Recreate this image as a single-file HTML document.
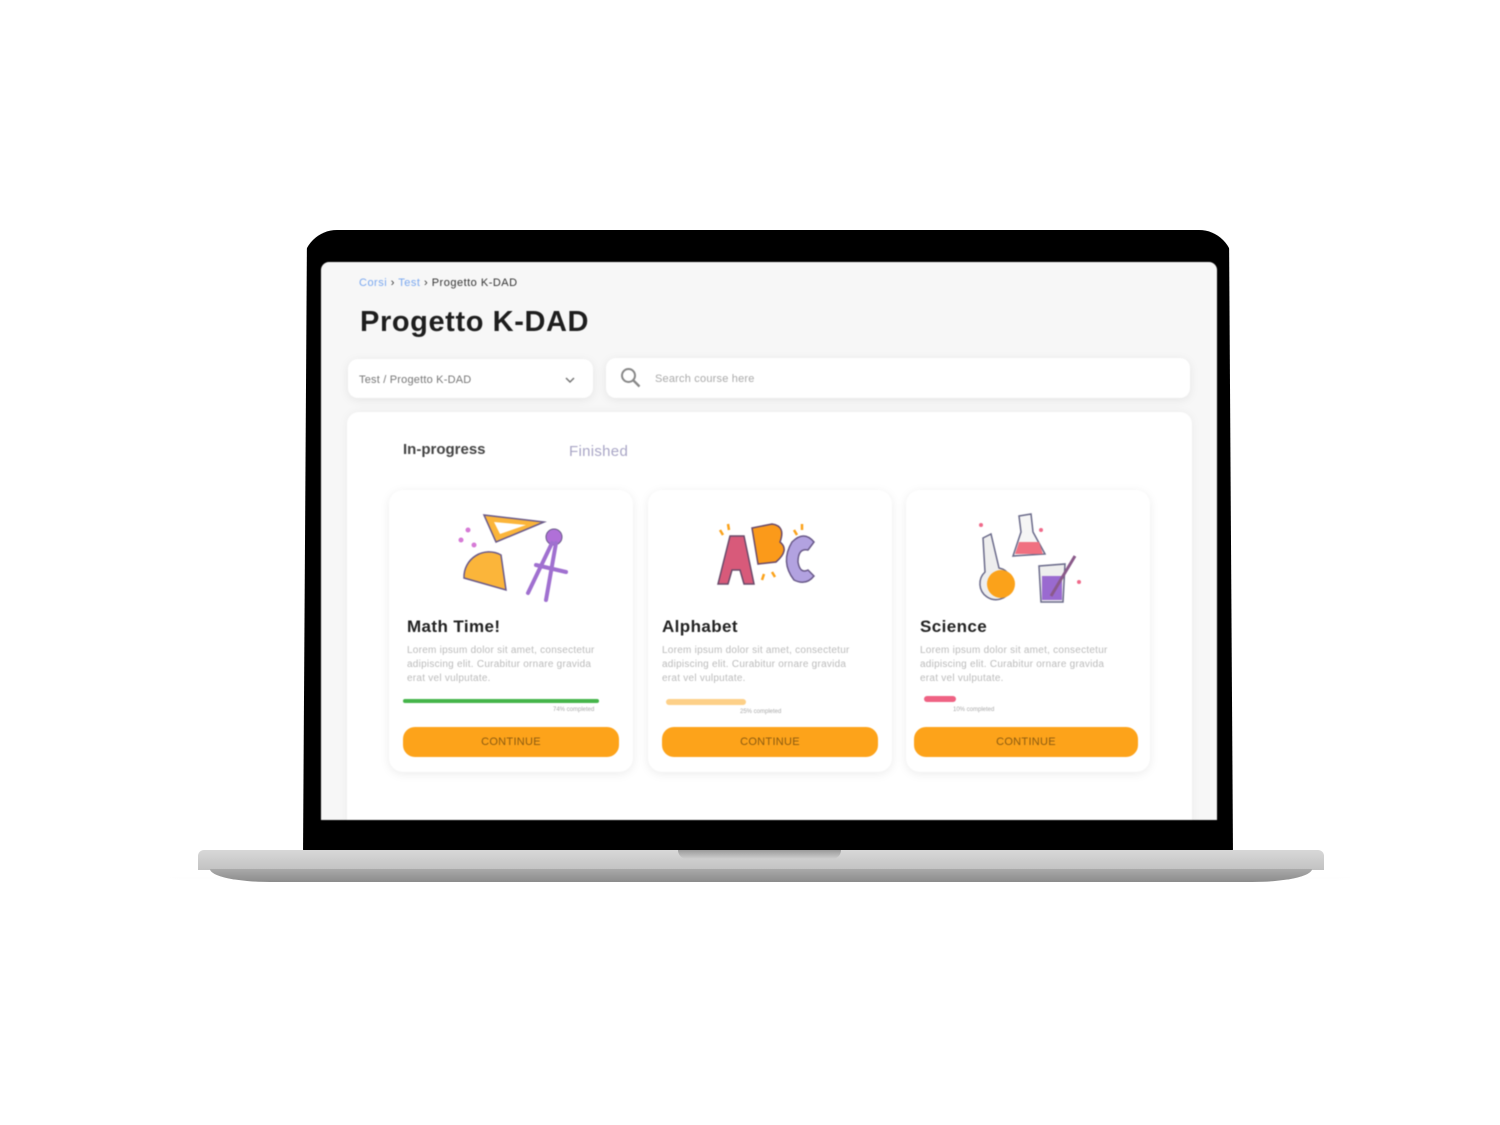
<!DOCTYPE html>
<html><head><meta charset="utf-8"><style>
*{margin:0;padding:0;box-sizing:border-box}
body{width:1500px;height:1125px;background:#fff;position:relative;overflow:hidden;font-family:"Liberation Sans",sans-serif}
.abs{position:absolute}
.bezel{left:303px;top:230px;width:930px;height:625px;background:#000;border-radius:34px 34px 6px 6px;clip-path:polygon(4px 0,926px 0,930px 100%,0 100%)}
.screen{left:321px;top:262px;width:896px;height:558px;background:#f7f7f7;border-radius:8px 8px 0 0;overflow:hidden;filter:blur(0.5px)}
.base{left:198px;top:850px;width:1126px;height:20px;background:linear-gradient(#d8d8d8,#c2c2c2);border-radius:6px 6px 0 0}
.base2{left:210px;top:869px;width:1102px;height:13px;background:linear-gradient(#a9a9a9,#8c8c8c);border-radius:0 0 60px 60px/0 0 13px 13px}
.notch{left:678px;top:850px;width:163px;height:9px;background:linear-gradient(#9a9a9a,#cfcfcf);border-radius:0 0 10px 10px}
.card{background:#fff;border-radius:14px;box-shadow:0 2px 10px rgba(0,0,0,.08)}
.t{position:absolute;white-space:nowrap}
.ct{font-weight:bold;font-size:17px;color:#222;letter-spacing:.4px}
.lo{font-size:10px;color:#bbb;line-height:14px;white-space:normal;width:202px;letter-spacing:.25px}
.btn{position:absolute;height:30px;background:#fda31a;border-radius:12px;color:#8a5a10;font-size:11px;text-align:center;line-height:30px;letter-spacing:.3px}
.pc{font-size:6px;color:#aaa}
</style></head><body>
<div class="abs" style="left:140px;top:876px;width:1240px;height:4px;background:radial-gradient(ellipse,rgba(0,0,0,.08),transparent 70%)"></div>
<div class="abs bezel"></div>
<div class="abs base"></div>
<div class="abs base2"></div>
<div class="abs notch"></div>
<div class="abs screen">
 <div class="t" style="left:38px;top:15px;font-size:11px;color:#333;letter-spacing:.5px"><span style="color:#7aa8f0">Corsi</span> › <span style="color:#7aa8f0">Test</span> › Progetto K-DAD</div>
 <div class="t" style="left:39px;top:44px;font-size:29px;font-weight:bold;color:#1e1e1e;letter-spacing:.6px">Progetto K-DAD</div>
 <div class="abs card" style="left:27px;top:97px;width:245px;height:39px;border-radius:10px"></div>
 <div class="t" style="left:38px;top:112px;font-size:11px;color:#777;letter-spacing:.2px">Test / Progetto K-DAD</div>
 <svg class="abs" style="left:244px;top:114px" width="10" height="8"><path d="M1 2l4 4 4-4" stroke="#777" stroke-width="1.5" fill="none"/></svg>
 <div class="abs card" style="left:285px;top:96px;width:584px;height:40px;border-radius:10px"></div>
 <svg class="abs" style="left:299px;top:105px" width="22" height="22"><circle cx="8.5" cy="8.5" r="6.5" stroke="#888" stroke-width="2" fill="none"/><path d="M13.5 13.5l6 6" stroke="#888" stroke-width="2.3"/></svg>
 <div class="t" style="left:334px;top:111px;font-size:11px;color:#aaa;letter-spacing:.2px">Search course here</div>
 <div class="abs" style="left:26px;top:150px;width:845px;height:420px;background:#fff;border-radius:12px;box-shadow:0 0 10px rgba(0,0,0,.05)"></div>
 <div class="t" style="left:82px;top:179px;font-size:15px;font-weight:bold;color:#444">In-progress</div>
 <div class="t" style="left:248px;top:181px;font-size:15px;color:#a9a6c6;letter-spacing:.3px">Finished</div>

 <!-- card 1 -->
 <div class="abs card" style="left:68px;top:228px;width:244px;height:282px"></div>
 <svg class="abs" style="left:135px;top:248px" width="115" height="92">
  <polygon points="28,5 88,12 40,32" fill="#fbb53a" stroke="#6a5a8a" stroke-width="1.5"/><polygon points="38,12 70,15 44,24" fill="#fff"/>
  <path d="M8 68 A25 25 0 0 1 45 45 L50 80 Z" fill="#fbb53a" stroke="#6a5a8a" stroke-width="1.5"/>
  <circle cx="98" cy="27" r="8" fill="#b070d8" stroke="#6a5a8a"/>
  <path d="M96 33 L72 83 M100 33 L90 90 M80 55 L110 62" stroke="#a070d0" stroke-width="4" stroke-linecap="round"/>
  <circle cx="12" cy="20" r="2.5" fill="#d67ad6"/><circle cx="5" cy="30" r="2.5" fill="#d67ad6"/><circle cx="18" cy="35" r="2.5" fill="#d67ad6"/>
 </svg>
 <div class="t ct" style="left:86px;top:355px">Math Time!</div>
 <div class="t lo" style="left:86px;top:382px">Lorem ipsum dolor sit amet, consectetur adipiscing elit. Curabitur ornare gravida erat vel vulputate.</div>
 <div class="abs" style="left:82px;top:437px;width:196px;height:4px;background:#45b54a;border-radius:2px"></div>
 <div class="t pc" style="left:232px;top:445px">74% completed</div>
 <div class="btn" style="left:82px;top:465px;width:216px">CONTINUE</div>

 <!-- card 2 -->
 <div class="abs card" style="left:327px;top:228px;width:244px;height:282px"></div>
 <svg class="abs" style="left:393px;top:258px" width="110" height="70">
  <path d="M4 64 L16 16 L30 16 L40 64 L30 64 L26 50 L18 50 L14 64 Z" fill="#d85a7a" stroke="#6a4a6a" stroke-width="1.5"/>
  <path d="M38 8 L58 4 Q72 6 66 22 Q76 30 62 42 L44 44 Z" fill="#fb9a1a" stroke="#6a4a6a" stroke-width="1.5"/>
  <path d="M100 22 Q90 10 78 22 Q66 42 80 60 Q92 66 100 56 L94 50 Q86 54 84 42 Q84 28 94 30 Z" fill="#b2a2e0" stroke="#6a5a8a" stroke-width="1.5"/>
  <path d="M6 10l3 5M14 4l1 6M80 10l3 5M88 4l0 6M50 54l-2 6M58 52l3 5" stroke="#fba21a" stroke-width="2.5"/>
 </svg>
 <div class="t ct" style="left:341px;top:355px">Alphabet</div>
 <div class="t lo" style="left:341px;top:382px">Lorem ipsum dolor sit amet, consectetur adipiscing elit. Curabitur ornare gravida erat vel vulputate.</div>
 <div class="abs" style="left:345px;top:437px;width:80px;height:6px;background:#fdd088;border-radius:3px"></div>
 <div class="t pc" style="left:419px;top:447px">25% completed</div>
 <div class="btn" style="left:341px;top:465px;width:216px">CONTINUE</div>

 <!-- card 3 -->
 <div class="abs card" style="left:585px;top:228px;width:244px;height:282px"></div>
 <svg class="abs" style="left:652px;top:248px" width="112" height="95">
  <path d="M10 28 L18 24 L26 58 A16 16 0 1 1 12 62 Z" fill="#eee" stroke="#6a6a8a" stroke-width="1.5"/>
  <circle cx="28" cy="74" r="14" fill="#fba21a"/>
  <path d="M46 6 L58 4 L60 22 L72 44 L40 46 L48 22 Z" fill="#f5f5f5" stroke="#6a6a8a" stroke-width="1.5"/><path d="M46 32 L66 32 L70 44 L42 44 Z" fill="#f07080"/>
  <path d="M66 56 L92 54 L90 92 L68 92 Z" fill="#eee" stroke="#6a6a8a" stroke-width="1.5"/><rect x="69" y="66" width="20" height="24" fill="#9a6ad0"/>
  <path d="M78 86 L102 46" stroke="#8a5a8a" stroke-width="3"/>
  <circle cx="8" cy="15" r="2" fill="#f06a8a"/><circle cx="68" cy="20" r="2" fill="#f06a8a"/><circle cx="106" cy="72" r="2" fill="#f06a8a"/><circle cx="64" cy="97" r="2" fill="#f06a8a"/>
 </svg>
 <div class="t ct" style="left:599px;top:355px">Science</div>
 <div class="t lo" style="left:599px;top:382px">Lorem ipsum dolor sit amet, consectetur adipiscing elit. Curabitur ornare gravida erat vel vulputate.</div>
 <div class="abs" style="left:603px;top:434px;width:32px;height:6px;background:#ef6283;border-radius:3px"></div>
 <div class="t pc" style="left:632px;top:445px">10% completed</div>
 <div class="btn" style="left:593px;top:465px;width:224px">CONTINUE</div>
</div>
</body></html>
